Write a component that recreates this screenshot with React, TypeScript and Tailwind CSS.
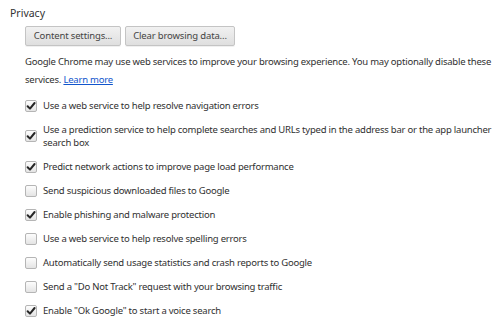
import React from 'react'

const items = [
    { label: 'Use a web service to help resolve navigation errors', checked: true },
    { label: 'Use a prediction service to help complete searches and URLs typed in the address bar or the app launcher search box', checked: true },
    { label: 'Predict network actions to improve page load performance', checked: true },
    { label: 'Send suspicious downloaded files to Google', checked: false },
    { label: 'Enable phishing and malware protection', checked: true },
    { label: 'Use a web service to help resolve spelling errors', checked: false },
    { label: 'Automatically send usage statistics and crash reports to Google', checked: false },
    { label: 'Send a "Do Not Track" request with your browsing traffic', checked: false },
    { label: 'Enable "Ok Google" to start a voice search', checked: true },
]

const Checkbox = ({ checked }: { checked: boolean }) => (
    <div className="w-[12px] h-[12px] shrink-0 rounded-[2px] border border-[#b5b5b5] bg-gradient-to-b from-[#fdfdfd] to-[#e4e4e4] relative">
        {checked && (
            <svg viewBox="0 0 12 12" className="absolute -left-[1px] -top-[1px] w-[12px] h-[12px]">
                <path d="M2.6 6.2 L5 8.6 L9.6 3" fill="none" stroke="#262626" strokeWidth="2" strokeLinecap="round" strokeLinejoin="round" />
            </svg>
        )}
    </div>
)

const App = () => {
    return (
        <div className="w-[500px] h-[323px] bg-white overflow-hidden text-[#303030] pl-[10px] pt-[6px]" style={{ fontFamily: '"Noto Sans", "Open Sans", sans-serif' }}>
            <h3 className="text-[10.5px] leading-[14px] text-[#333]">Privacy</h3>

            <div className="pl-[15px]">
                {/* Buttons */}
                <div className="flex gap-[4px] mt-[6px]">
                    <button className="w-[96px] h-[20px] rounded-[2px] border border-[#c4c4c4] bg-gradient-to-b from-[#f1f1f1] to-[#dfdfdf] text-[9.5px] tracking-[-0.15px] text-[#444] shadow-[0_1px_0_rgba(0,0,0,0.06)]">
                        Content settings...
                    </button>
                    <button className="w-[110px] h-[20px] rounded-[2px] border border-[#c4c4c4] bg-gradient-to-b from-[#f1f1f1] to-[#dfdfdf] text-[9.5px] tracking-[-0.15px] text-[#444] shadow-[0_1px_0_rgba(0,0,0,0.06)]">
                        Clear browsing data...
                    </button>
                </div>

                {/* Description */}
                <p className="mt-[7px] w-[474px] text-[9.5px] tracking-[-0.22px] leading-[18px]">
                    Google Chrome may use web services to improve your browsing experience. You may optionally disable these services.{' '}
                    <a href="#" className="text-[#1155cc] underline">Learn more</a>
                </p>

                {/* Options */}
                <div className="flex flex-col gap-[11px] mt-[10px]">
                    {items.map((item, i) => (
                        <label key={i} className="flex items-center gap-[6px]">
                            <Checkbox checked={item.checked} />
                            <span className="w-[454px] text-[9.5px] tracking-[-0.22px] leading-[13px]">{item.label}</span>
                        </label>
                    ))}
                </div>
            </div>
        </div>
    )
}

export default App
